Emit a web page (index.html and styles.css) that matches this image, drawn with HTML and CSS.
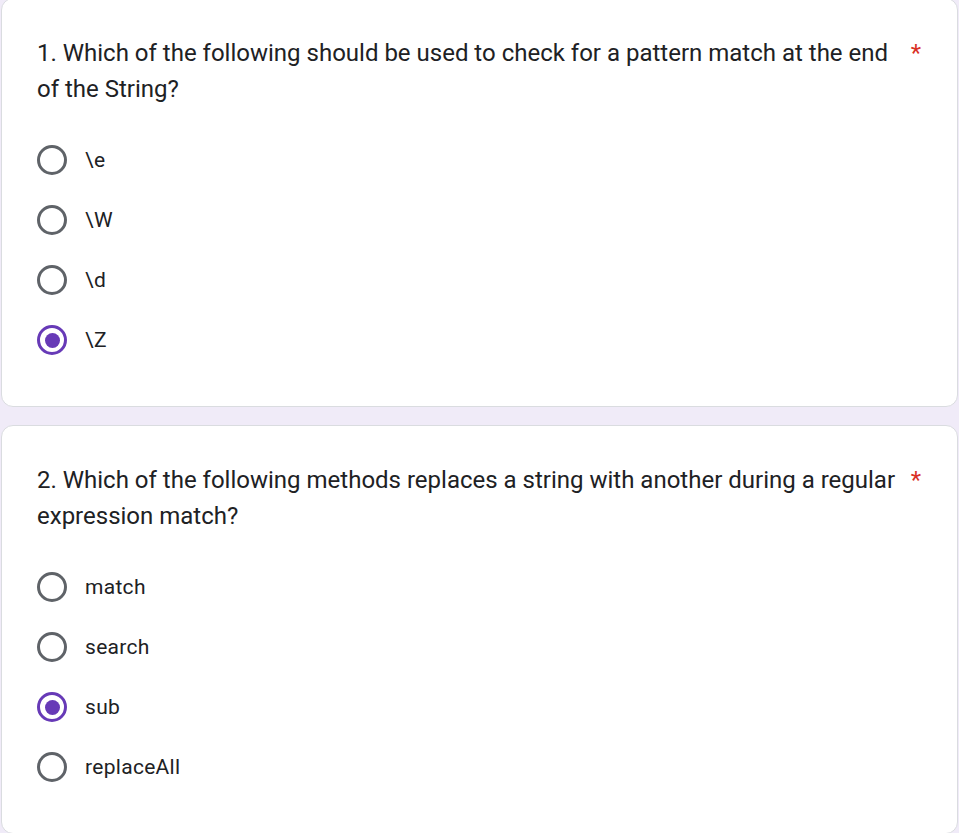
FILE: index.html
```html
<!DOCTYPE html>
<html lang="en">
<head>
<meta charset="utf-8">
<title>Quiz</title>
<link rel="stylesheet" href="styles.css">
</head>
<body>
<div class="page">
  <div class="card card-first">
    <div class="title-row">
      <div class="title">1. Which of the following should be used to check for a pattern match at the end of the String?</div>
      <span class="req">*</span>
    </div>
    <div class="options">
      <div class="option"><span class="radio"></span><span class="label">\e</span></div>
      <div class="option"><span class="radio"></span><span class="label">\W</span></div>
      <div class="option"><span class="radio"></span><span class="label">\d</span></div>
      <div class="option"><span class="radio checked"></span><span class="label">\Z</span></div>
    </div>
  </div>
  <div class="card">
    <div class="title-row">
      <div class="title">2. Which of the following methods replaces a string with another during a regular expression match?</div>
      <span class="req">*</span>
    </div>
    <div class="options">
      <div class="option"><span class="radio"></span><span class="label">match</span></div>
      <div class="option"><span class="radio"></span><span class="label">search</span></div>
      <div class="option"><span class="radio checked"></span><span class="label">sub</span></div>
      <div class="option"><span class="radio"></span><span class="label">replaceAll</span></div>
    </div>
  </div>
</div>
</body>
</html>
```

FILE: styles.css
```css
html, body {
  margin: 0;
  padding: 0;
  background: #f0ebf8;
  font-family: Roboto, "Liberation Sans", Arial, sans-serif;
  color: #202124;
  overflow: hidden;
}
.page {
  padding: 0 1px;
  display: flex;
  flex-direction: column;
  gap: 18px;
}
.card {
  background: #fff;
  border: 1px solid #dadce0;
  border-radius: 12px;
  padding: 36px 36px 36px 35px;
}
.card-first {
  margin-top: -2px;
}
.title-row {
  display: flex;
  align-items: flex-start;
}
.title {
  flex: 1;
  font-size: 24px;
  line-height: 36px;
  letter-spacing: 0;
}
.req {
  flex: none;
  color: #d93025;
  font-size: 24px;
  line-height: 36px;
  padding-left: 8px;
}
.options {
  padding-top: 23px;
  display: flex;
  flex-direction: column;
}
.option {
  height: 60px;
  display: flex;
  align-items: center;
  gap: 18px;
}
.radio {
  width: 30px;
  height: 30px;
  box-sizing: border-box;
  border: 3px solid #5f6368;
  border-radius: 50%;
  flex: none;
  display: flex;
  align-items: center;
  justify-content: center;
}
.radio.checked {
  border-color: #673ab7;
}
.radio.checked::after {
  content: "";
  width: 15px;
  height: 15px;
  border-radius: 50%;
  background: #673ab7;
}
.label {
  font-size: 21px;
  line-height: 30px;
  letter-spacing: 0.3px;
}
```
